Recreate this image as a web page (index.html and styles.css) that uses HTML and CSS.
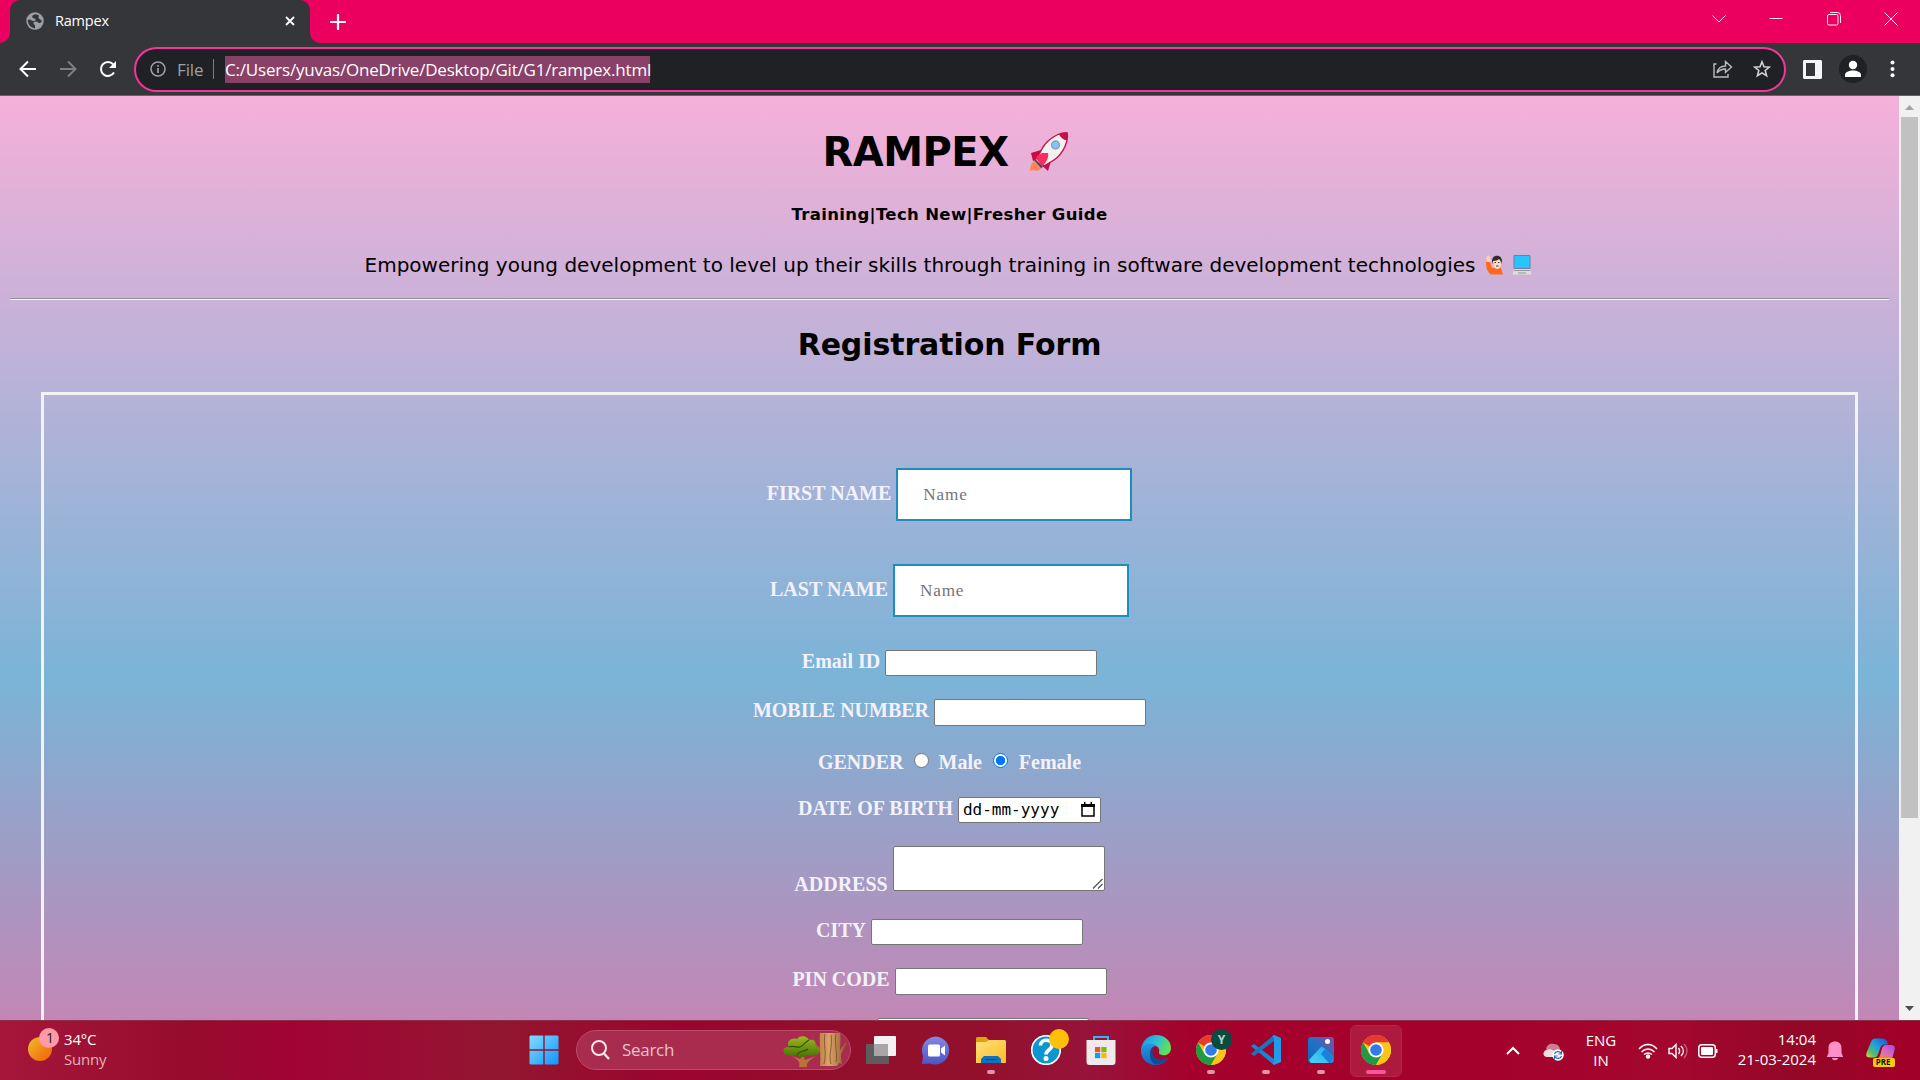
FILE: index.html
```html
<!DOCTYPE html>
<html lang="en">
<head>
<meta charset="utf-8">
<title>Rampex</title>
<link rel="stylesheet" href="styles.css">
</head>
<body>
<svg width="0" height="0" class="defs">
  <defs>
    <symbol id="chrome" viewBox="0 0 30 30">
      <circle cx="15" cy="15" r="15" fill="#fbc116"/>
      <path d="M15 15 2 7.5A15 15 0 0 1 28 7.5H15Z" fill="#e33b2e"/>
      <path d="M2 7.5A15 15 0 0 0 15 30L21.5 18.8 15 15 8.5 18.7Z" fill="#219a48"/>
      <path d="M28 7.5H15L21.5 18.8 15 30A15 15 0 0 0 28 7.5Z" fill="#fcc31a"/>
      <circle cx="15" cy="15" r="7.6" fill="#fff"/><circle cx="15" cy="15" r="5.8" fill="#2f7bea"/>
    </symbol>
    <linearGradient id="sun" x1="0" y1="0" x2="1" y2="1"><stop offset="0" stop-color="#efbf33"/><stop offset=".7" stop-color="#f1780f"/><stop offset="1" stop-color="#ef6a10"/></linearGradient>
    <linearGradient id="win" x1="0" y1="0" x2="1" y2="1"><stop offset="0" stop-color="#83dcff"/><stop offset="1" stop-color="#0d95fb"/></linearGradient>
    <linearGradient id="fold" x1="0" y1="0" x2="1" y2="1"><stop offset="0" stop-color="#ffe07a"/><stop offset="1" stop-color="#fbbd24"/></linearGradient>
    <linearGradient id="chat" x1="0" y1="0" x2="0" y2="1"><stop offset="0" stop-color="#8388e0"/><stop offset="1" stop-color="#4a55c6"/></linearGradient>
    <linearGradient id="edge1" x1="0" y1="0" x2="1" y2=".4"><stop offset="0" stop-color="#1b8fe0"/><stop offset=".55" stop-color="#2cc0d8"/><stop offset="1" stop-color="#5fe15a"/></linearGradient>
    <linearGradient id="edge2" x1="0" y1="0" x2="0" y2="1"><stop offset="0" stop-color="#2596e3"/><stop offset="1" stop-color="#1268b8"/></linearGradient>
    <linearGradient id="photo" x1="0" y1="1" x2="1" y2="0"><stop offset="0" stop-color="#0d66b8"/><stop offset=".5" stop-color="#2072c4"/><stop offset="1" stop-color="#8a4a9c"/></linearGradient>
    <linearGradient id="hill" x1="0" y1="1" x2="1" y2="0"><stop offset="0" stop-color="#45d5f8"/><stop offset="1" stop-color="#2ea3ea"/></linearGradient>
    <linearGradient id="cop1" x1="1" y1="0" x2="0" y2="1"><stop offset="0" stop-color="#1c50d4"/><stop offset=".45" stop-color="#1d9fe0"/><stop offset=".75" stop-color="#55bd6c"/><stop offset="1" stop-color="#e8d62c"/></linearGradient>
    <linearGradient id="cop2" x1="1" y1="0" x2="0" y2="1"><stop offset="0" stop-color="#9550e8"/><stop offset=".5" stop-color="#dc6ab8"/><stop offset="1" stop-color="#f58a50"/></linearGradient>
    <linearGradient id="trunk" x1="0" y1="0" x2="1" y2="0"><stop offset="0" stop-color="#bd8548"/><stop offset=".35" stop-color="#dca36a"/><stop offset="1" stop-color="#8a572c"/></linearGradient>
    <linearGradient id="leaf" x1="0" y1="0" x2="0" y2="1"><stop offset="0" stop-color="#a0b81c"/><stop offset="1" stop-color="#467308"/></linearGradient>
  </defs>
</svg>

<header class="browser">
  <div class="tabstrip">
    <div class="tab">
      <svg width="18" height="18" viewBox="0 0 18 18"><circle cx="9" cy="9" r="8.7" fill="#9aa0a6"/><path d="M9.500 2.200C7 2.500 5.500 4 6.500 5.500S10 6 9.500 8 6 9 5 8 2 8 1.700 8.500C2 12.500 5 16 9 16.300V13c-1.500-.5-2-2-1-3s3-.5 4.200.4S15 11 15.800 9.500C15.500 7 13 7.500 12.600 6S13.500 4 12.500 3Z" fill="#35363a"/></svg>
      <span class="tab-title">Rampex</span>
      <svg width="10" height="10" viewBox="0 0 10 10" class="tab-close"><path d="m1 1 8 8M9 1 1 9" stroke="#fff" stroke-width="1.800"/></svg>
    </div>
    <svg class="new-tab" width="16" height="16" viewBox="0 0 16 16"><path d="M8 1v14M1 8h14" stroke="#fff" stroke-width="2.200" stroke-linecap="round"/></svg>
    <div class="window-buttons">
      <svg width="14" height="14" viewBox="0 0 14 14"><path d="m.5 3.500 6.500 6.500 6.500-6.500"/></svg>
      <svg width="14" height="14" viewBox="0 0 14 14"><path d="M.5 6.500h13"/></svg>
      <svg width="14" height="14" viewBox="0 0 14 14"><rect x=".5" y="2.500" width="10.500" height="10.500" rx="1.500"/><path d="M3 .5h7.500a3 3 0 0 1 3 3V11"/></svg>
      <svg width="14" height="14" viewBox="0 0 14 14"><path d="m.5.5 13 13M13.500.5l-13 13"/></svg>
    </div>
  </div>
  <div class="toolbar">
    <div class="nav">
      <svg width="18" height="18" viewBox="0 0 18 18" stroke="#fff"><path d="M17 9H2M9 1.500 1.500 9 9 16.500"/></svg>
      <svg width="18" height="18" viewBox="0 0 18 18" stroke="#7d7f83"><path d="M1 9h15M9 1.500 16.500 9 9 16.500"/></svg>
      <svg width="18" height="18" viewBox="0 0 18 18" stroke="#fff"><path d="M15 12.500A7 7 0 1 1 14.200 4.300"/><path d="M17 1v7h-7Z" fill="#fff" stroke="none"/></svg>
    </div>
    <div class="omnibox">
      <svg width="16" height="16" viewBox="0 0 16 16"><circle cx="8" cy="8" r="7" fill="none" stroke="#9aa0a6" stroke-width="1.600"/><path d="M8 7v5M8 4v1.700" stroke="#9aa0a6" stroke-width="1.700"/></svg>
      <span class="scheme">File</span>
      <span class="divider"></span>
      <span class="url">C:/Users/yuvas/OneDrive/Desktop/Git/G1/rampex.html</span>
      <svg class="share" width="20" height="18" viewBox="0 0 20 18" fill="none" stroke="#b9bbbe" stroke-width="1.400"><path d="M3.500 4H1v13h14v-3"/><path d="M4 13C5 8 8 6 12.500 6V1.500l6 5.500-6 5.500V9C9 9 6.500 10 4 13Z"/></svg>
      <svg width="18" height="18" viewBox="0 0 18 18" fill="none" stroke="#d0d2d5" stroke-width="1.600"><path d="m9 1.800 2 5 5.400.3-4.200 3.400 1.400 5.300L9 12.900l-4.600 2.900 1.400-5.300L1.600 7.100 7 6.800Z"/></svg>
    </div>
    <svg class="panel-icon" width="19" height="19" viewBox="0 0 19 19"><path fill="#f4f5f7" fill-rule="evenodd" d="M1 0h17l1 1v17l-1 1H1l-1-1V1ZM3 3v13h9V3Z"/></svg>
    <svg class="avatar" width="28" height="28" viewBox="0 0 28 28"><circle cx="14" cy="14" r="14" fill="#202124"/><circle cx="14" cy="10" r="4.200" fill="#fff"/><path d="M6 22v-2c0-3 4-4.500 8-4.500s8 1.500 8 4.500v2Z" fill="#fff"/></svg>
    <svg class="menu" width="5" height="18" viewBox="0 0 5 18" fill="#fff"><circle cx="2.500" cy="2.500" r="2"/><circle cx="2.500" cy="9" r="2"/><circle cx="2.500" cy="15.300" r="2"/></svg>
  </div>
</header>

<div class="viewport">
  <main class="page">
    <h1><span>RAMPEX</span>
      <svg width="40" height="40" viewBox="0 0 40 40"><path d="M8 28c-5 1-7 5-7 11l4-1 2 1c5-1 7-4 7-7Z" fill="#ff8657"/><path d="M12 18 2 21l2 8 8-4ZM22 29l-3 10-9-8Z" fill="#c80c49"/><path d="M38 1c-7-1-18 5-24 14L8 26l7 8 10-6C35 21 40 8 38 1Z" fill="#f3f1f1" stroke="#c80c49" stroke-width="1.400"/><path d="M38.500.700C35 .1 32 1.200 30 2.500c2 3 4.500 5.500 7.500 6C39 5 39.500 2.500 38.500.700Z" fill="#c80c49"/><path d="m7 25 6-4 6 0c1 5-2 10-6 13Z" fill="#fb2d5f"/><path d="m6 27 8 8-2 1-7-8Z" fill="#513a78"/><circle cx="26.500" cy="13" r="4" fill="#7fc4fb" stroke="#969fa3" stroke-width="1.400"/></svg>
    </h1>
    <h3><span>Training|Tech New|Fresher Guide</span></h3>
    <p><span>Empowering young development to level up their skills through training in software development technologies</span>
      <svg class="hand" width="18" height="20" viewBox="0 0 18 20"><path d="M0 7 4 7l2 6 9 0 2 6.500H5C1 17 0 12 0 7Z" fill="#ff681f"/><path d="M1 7 0 3l2-3 2 2 1 5Z" fill="#fdd0b5"/><path d="M6 6c0-7 10-7 10 0l-1 3H7Z" fill="#352a2d"/><path d="M7 6c3 0 5-1 6-2 1 1 2 2 2 4 0 4-2 6-4 6S7 11 7 6Z" fill="#fbdcc8"/><path d="M8.500 7.500H10M12 7.500h1.500M10 11h2.500" stroke="#553037"/></svg>
      <svg class="laptop" width="20" height="20" viewBox="0 0 20 20"><path d="M2 .5h16v13H2Z" fill="#27c5ff" stroke="#747aa8"/><path d="M2 14h16l1.500 5.500H.5Z" fill="#ddd"/><path d="M2 15.500h16M6 18h8" stroke="#969696" stroke-width="1.200"/></svg>
    </p>
    <hr>
    <h2><span>Registration Form</span></h2>
    <form class="form">
      <div class="row tall"><label class="label">FIRST NAME</label><input class="name" placeholder="Name"></div>
      <div class="row tall"><label class="label">LAST NAME</label><input class="name" placeholder="Name"></div>
      <div class="row"><label class="label">Email ID</label><input class="field"></div>
      <div class="row"><label class="label">MOBILE NUMBER</label><input class="field high"></div>
      <div class="row gender"><span class="label">GENDER</span><i class="radio"></i><span class="label">Male</span><i class="radio on"></i><span class="label">Female</span></div>
      <div class="row"><label class="label">DATE OF BIRTH</label><div class="date"><span>dd-mm-yyyy</span><svg width="14" height="15" viewBox="0 0 14 15"><path d="M1 3h12v11H1Z" fill="none" stroke="#000" stroke-width="1.500"/><path d="M0 2h14v3H0ZM3 0h1.500v3H3ZM9.500 0H11v3H9.500Z"/></svg></div></div>
      <div class="row address"><label class="label">ADDRESS</label><div class="area"><svg width="11" height="11" viewBox="0 0 11 11"><path d="M1 10.500 10.500 1M6 10.500 10.500 6" stroke="#555" stroke-width="1.300"/></svg></div></div>
      <div class="row"><label class="label">CITY</label><input class="field"></div>
      <div class="row"><label class="label">PIN CODE</label><input class="field high"></div>
      <div class="row"><label class="label">STATE</label><input class="field"></div>
    </form>
  </main>
  <div class="scrollbar">
    <svg width="9" height="5" viewBox="0 0 9 5"><path d="M0 5h9L4.500 0Z" fill="#a3a3a3"/></svg>
    <div class="thumb"></div>
    <svg width="9" height="5" viewBox="0 0 9 5"><path d="M0 0h9L4.500 5Z" fill="#505050"/></svg>
  </div>
</div>

<footer class="taskbar">
  <div class="weather">
    <svg width="31" height="35" viewBox="0 0 31 35"><circle cx="12" cy="21" r="12" fill="url(#sun)"/><circle cx="21" cy="10" r="10" fill="#ff9ba6"/><text x="18" y="15" class="badge-num">1</text></svg>
    <div><div>34°C</div><div class="dim">Sunny</div></div>
  </div>
  <div class="apps">
    <div class="app"><svg width="30" height="30" viewBox="0 0 30 30" fill="url(#win)"><path d="M1.500.5H14.300V14.300H.5V1.500ZM15.700.5h12.800l1 1v12.800H15.700ZM.5 15.700h13.800v13.800H1.500l-1-1ZM15.700 15.700h13.800v12.800l-1 1H15.700Z"/></svg></div>
    <div class="search">
      <svg width="19" height="20" viewBox="0 0 19 20" fill="none" stroke="#f6e9ee" stroke-width="2"><circle cx="8" cy="8" r="7"/><path d="m13 13.500 5 5.500" stroke-width="2.400"/></svg>
      <span>Search</span>
      <svg class="tree" width="64" height="34" viewBox="0 0 64 34"><path d="M16 34c1-4 1-6-7-11l8 3 3-4 2 5 11-4c-6 4-10 6-9 11Z" fill="#b87436"/><path d="M1 20C-1 15 3 14 6 14 2 8 10 4 14 6c4-5 11-2 12 1 5-1 7 2 7 6 5 1 5 7 2 8-4 3-9 1-12 2-3 2-8 1-9-1-5 1-10 2-13-2Z" fill="url(#leaf)"/><path d="M6 14c5-2 8 1 11 0s5-5 9-7M14 22c2-5 8-3 11-6" stroke="#315606" fill="none" stroke-width="1.300"/><path d="m28 0 6 12 5 5-4 0Z" fill="#a0683a"/><path d="M37 0h20c1 6 0 12 0 17l6-8 1 1-5 9c-2 4-1 8 0 12l-3-1-2 3H37c1-12-1-22 0-34Z" fill="url(#trunk)"/><path d="M42 1c-2 10 2 18-1 30M48 2c2 10-3 20 0 29M53 1c-2 10 2 20 0 28" stroke="#83522b" stroke-width=".9" fill="none"/></svg>
    </div>
    <div class="app"><svg width="32" height="28" viewBox="0 0 32 28"><rect x="1" y="8" width="23" height="20" rx="1" fill="#5f5c5d"/><rect x="9" y="0" width="22" height="20" rx="1" fill="#f2f2f2"/><path d="M9 8h14v12H9Z" fill="#aaa5a7"/></svg></div>
    <div class="app"><svg width="30" height="29" viewBox="0 0 30 29"><path d="M15 .5a14 14 0 1 1-6 27L1 28l1-8A14 14 0 0 1 15 .5Z" fill="url(#chat)"/><rect x="7" y="8.500" width="12" height="12" rx="1.500" fill="#fff"/><path d="m20 12.500 4-3v10l-4-3Z" fill="#fff"/></svg></div>
    <div class="app open"><svg width="30" height="28" viewBox="0 0 30 28"><path d="M0 2 1 1h9l3 3h6v6H0Z" fill="#dfa00e"/><path d="M0 6h10l3-2h16l1 1v22H0Z" fill="url(#fold)"/><path d="M5 27v-4l3-3h14l3 3v4Z" fill="#1072bd"/><path d="M9 23.500h12" stroke="#064f88" stroke-width="1.200"/></svg></div>
    <div class="app"><svg width="30" height="30" viewBox="0 0 30 30"><circle cx="15" cy="15" r="14.300" fill="#0b96d2" stroke="#fff" stroke-width="1.700"/><path d="M9.500 10.500c0-7 11.500-7 11.500-.5 0 5-6 4.500-6 9.500" fill="none" stroke="#fff" stroke-width="3.600"/><circle cx="15" cy="23.500" r="2.500" fill="#fff"/></svg><i class="dot-badge"></i></div>
    <div class="app"><svg width="30" height="30" viewBox="0 0 30 30"><path d="M8 7V2h14v5" fill="none" stroke="#31b7ed" stroke-width="2"/><path d="M.5 5h29v22q0 3-3 3h-23q-3 0-3-3Z" fill="#eee9ea"/><path d="M9 12h5.200v5.200H9Z" fill="#f25022"/><path d="M15.300 12h5.200v5.200h-5.200Z" fill="#7fba00"/><path d="M9 18h5.200v5.200H9Z" fill="#00a4ef"/><path d="M15.300 18h5.200v5.200h-5.200Z" fill="#ffb900"/></svg></div>
    <div class="app"><svg width="30" height="30" viewBox="0 0 30 30"><path d="M0 15C1 5 8 0 15 0c9 0 15 6 15 13 0 6-5 8-9 7-5-1-2-3-3-6-2-5-12-6-18 1Z" fill="url(#edge1)"/><path d="M0 16C1 8 12 7 16 11c-6 0-8 5-6 10s10 6 17 2c-2 4-7 7-12 7C6 30 0 24 0 16Z" fill="url(#edge2)"/><path d="M13 12c-6 4-5 12 0 17 5 1 11-1 14-6-6 3-13 2-15-3-1-3-1-6 1-8Z" fill="#0d4c98"/></svg></div>
    <div class="app open"><svg width="30" height="30"><use href="#chrome"/></svg><b class="profile">Y</b></div>
    <div class="app open"><svg width="31" height="30" viewBox="0 0 31 30"><path d="m0 11 3-2 20 15v6L1 12Z" fill="#1a85d0"/><path d="m0 19 3 2L23 6V0L1 18Z" fill="#1577c2"/><path d="m23 0 7 3v24l-7 3-2-2c1 1 2 0 2-1V3L21 1.500Z" fill="#239be9"/></svg></div>
    <div class="app open"><svg width="26" height="26" viewBox="0 0 26 26"><rect width="26" height="26" rx="3" fill="url(#photo)"/><path d="M1 23 12 11q2-2 4 0l9 9v4l-2 2H3Z" fill="url(#hill)"/><path d="m13 17 4-5 8.500 9-2.500 5H21Z" fill="#1682db"/><circle cx="19.500" cy="4.500" r="2.500" fill="#fff"/></svg></div>
    <div class="app open active"><svg width="30" height="30"><use href="#chrome"/></svg></div>
  </div>
  <div class="tray">
    <svg class="chev" width="14" height="9" viewBox="0 0 14 9"><path d="m1 8 6-6 6 6" fill="none" stroke="#fff" stroke-width="2"/></svg>
    <svg class="cloud" width="21" height="18" viewBox="0 0 21 18"><path d="M3 6C4 1 8 0 11 1c4 0 6 3 6 6l-5 5Z" fill="#cb8091"/><path d="M4 14c-4 0-5-5-1-7 3-1 6-1 8 1l3 6Z" fill="#f1dce2"/><circle cx="15" cy="12" r="5.800" fill="#fff"/><path d="M11.500 11c1-3 5-3 6.500-1M18.500 13c-1 3-5 3-6.500 1M18.500 8v3h-3M11.500 16v-3h3" fill="none" stroke="#1b6bb8" stroke-width="1.200"/></svg>
    <div class="lang"><div>ENG</div><div>IN</div></div>
    <svg class="wifi" width="20" height="16" viewBox="0 0 20 16" fill="none" stroke="#fff" stroke-width="1.500"><path d="M1 6c5-6 13-6 18 0M3.500 9c4-4 9-4 13 0M6 11.500c2.500-2 5.500-2 8 0"/><circle cx="10" cy="13.500" r="1.500" fill="#fff"/></svg>
    <svg class="sound" width="20" height="16" viewBox="0 0 20 16" fill="none" stroke="#fff" stroke-width="1.400"><path d="M1 5.500h3L8 1.500v13l-4-4H1Z"/><path d="M10.500 5c1.500 2 1.500 4 0 6M13 3c3 3 3 7 0 10"/><path d="M16 1c4 4 4 10 0 14" opacity=".35"/></svg>
    <svg class="battery" width="20" height="14" viewBox="0 0 20 14"><rect x=".8" y=".8" width="16.500" height="12.400" rx="3" fill="none" stroke="#fff" stroke-width="1.500"/><rect x="3" y="3" width="12" height="8" rx="1" fill="#fff"/><path d="M18.500 5v4" stroke="#fff" stroke-width="2"/></svg>
    <div class="clock"><div>14:04</div><div>21-03-2024</div></div>
    <svg class="bell" width="16" height="20" viewBox="0 0 16 20" fill="#ff91c8"><path d="M0 15.500 1.500 12V7C1.500 3 4 .5 8 .5S14.500 3 14.500 7v5L16 15.500v.5H0ZM5 17h6c0 3-6 3-6 0Z"/></svg>
    <svg class="copilot" width="30" height="29" viewBox="0 0 30 29"><path d="M5 4Q6 .5 9 .5h8q4 0 5 6h-3q-4 0-5 4l-2 6q-1 3-4 3H4c-5 0-4-3-3-6Z" fill="url(#cop1)"/><path d="M15 14q1-6 4-7h6c5 0 4 4 3 7l-2 7H10c3 0 4-3 5-7Z" fill="url(#cop2)"/><rect x="7" y="20" width="22" height="9" rx="2" fill="#ffc90c"/><text x="9.700" y="27.300" class="pre">PRE</text></svg>
  </div>
</footer>
</body>
</html>
```
FILE: styles.css
```css
* { box-sizing: border-box; }
body { margin: 0; width: 1920px; height: 1080px; overflow: hidden; display: flex; flex-direction: column; font-family: "Open Sans", "Noto Sans", sans-serif; }
svg { flex: none; display: block; }
.defs { position: absolute; }

.browser { height: 96px; flex: none; color: #fff; }
.tabstrip { height: 43px; display: flex; align-items: center; background: #ec005f; padding-left: 10px; }
.tab { position: relative; width: 300px; height: 43px; background: #35363a; border-radius: 10px 10px 0 0; display: flex; align-items: center; padding: 0 14px 2px 16px; font-size: 14.500px; }
.tab::before, .tab::after { content: ""; position: absolute; bottom: 0; width: 10px; height: 10px; }
.tab::before { left: -10px; background: radial-gradient(circle at 0 0, #ec005f 9.500px, #35363a 10px); }
.tab::after { right: -10px; background: radial-gradient(circle at 100% 0, #ec005f 9.500px, #35363a 10px); }
.tab-title { margin-left: 11px; letter-spacing: -.2px; }
.tab-close { margin-left: auto; margin-right: 1px; }
.new-tab { margin-left: 20px; }
.window-buttons { margin-left: auto; display: flex; gap: 43.500px; padding-right: 22px; padding-bottom: 6px; }
.window-buttons svg { fill: none; stroke: #ffe5ef; stroke-width: 1px; }
.toolbar { height: 53px; background: #35363a; border-bottom: 1px solid #626367; display: flex; align-items: center; padding-left: 19px; }
.nav { display: flex; gap: 22px; width: 115px; }
.nav svg { fill: none; stroke-width: 2px; }
.omnibox { width: 1652px; height: 45px; border: 2px solid #f2369c; border-radius: 23px; background: #202124; display: flex; align-items: center; padding: 0 13px 0 14px; font-size: 17px; }
.scheme { color: #9aa0a6; margin-left: 11px; width: 27px; letter-spacing: -.1px; }
.divider { width: 1px; height: 20px; background: #7a7d82; margin: 0 11px 0 9px; }
.url { background: #8a4168; line-height: 27px; height: 27px; letter-spacing: -.2px; width: 425px; white-space: nowrap; }
.share { margin-left: auto; margin-right: 20px; }
.panel-icon { margin-left: 17px; }
.avatar { margin-left: 17px; }
.menu { margin-left: 23px; }

.viewport { height: 924px; flex: none; display: flex; overflow: hidden; }
.page { width: 1899px; height: 1162px; flex: none; display: flex; flex-direction: column; background: linear-gradient(#f6b0d9, #7ab4d7 50%, #f5679d); font-family: Verdana, "DejaVu Sans", sans-serif; color: #000; }
h1, h2, h3, p { margin: 0; flex: none; display: flex; justify-content: center; align-items: center; white-space: nowrap; }
h1 { height: 71px; margin-top: 20px; font-size: 40px; gap: 20px; line-height: 50px; letter-spacing: -.5px; padding-right: 8px; }
h3 { height: 40px; margin-top: 7px; font-size: 16.500px; letter-spacing: .35px; }
p { height: 40px; margin-top: 11px; font-size: 20px; letter-spacing: .01px; }
.hand { margin-left: 11px; }
.laptop { margin-left: 8px; margin-right: 2px; }
hr { margin: 13px 10px 0; border: 0; height: 2px; border-top: 1px solid #94959a; border-bottom: 1px solid #f5f0f6; flex: none; }
h2 { height: 50px; margin-top: 19px; font-size: 30px; letter-spacing: -.1px; }
.form { margin: 23px 41px 0; border: 3px solid #f3f3f6; padding-top: 73px; height: 900px; flex: none; display: grid; grid-template-rows: 96px 86px 49px 52px 46px 49px 73px 49px 50px 50px; font-family: "Liberation Serif", serif; }
.row { display: flex; justify-content: center; align-items: flex-start; gap: 5px; }
.label { font-size: 20px; line-height: 22px; font-weight: bold; color: #f4f1fa; white-space: nowrap; }
.tall .label { margin-top: 14px; }
.address .label { margin-top: 27px; }
input { font-family: inherit; border: 1px solid #767676; border-radius: 2px; background: #fff; padding: 0; outline: none; }
.name { width: 236px; height: 53px; border: 2px solid #1d8dbb; border-radius: 0; padding: 0 25px; font-size: 17.200px; letter-spacing: .8px; }
.name::placeholder { color: #757575; }
.field { width: 212px; height: 26px; }
.high { height: 27px; }
.gender { gap: 10px; }
.radio { width: 15px; height: 15px; margin-top: 2px; border: 1px solid #767676; border-radius: 50%; background: #fff; }
.radio.on { margin-left: 1px; margin-right: 1px; border: 1.500px solid #0075ff; background: radial-gradient(circle, #0075ff 4.300px, #fff 5px); }
.date { width: 143px; height: 26px; border: 1px solid #767676; border-radius: 2px; background: #fff; display: flex; justify-content: space-between; align-items: center; padding: 0 5px 2px 4px; font: 16px "DejaVu Sans Mono", monospace; }
.area { width: 212px; height: 45px; border: 1px solid #767676; border-radius: 2px; background: #fff; display: flex; justify-content: flex-end; align-items: flex-end; padding: 1px; }

.scrollbar { width: 21px; height: 924px; background: #f1f1f1; display: flex; flex-direction: column; align-items: center; padding: 9px 0 9px; }
.thumb { width: 17px; height: 701px; background: #c1c1c1; margin: 7px 0 auto; }

.taskbar { height: 60px; flex: none; border-top: 1px solid #8d3045; display: flex; color: #fff; font-size: 15px; line-height: 20px;
  background: linear-gradient(90deg, #a5163a 0, #960c2c 190px, #a20336 290px, #921630 500px, #9b042e 680px, #92102c 850px, #92102c 980px, #97133a 1090px, #a4022c 1190px, #a4022c 1480px, #a3072e 1680px, #930727 1800px, #a10129 1900px); }
.weather { display: flex; gap: 5px; padding: 8px 0 0 28px; width: 516px; flex: none; }
.weather > div { letter-spacing: -.2px; }
.weather svg { margin-top: -1px; }
.dim { color: #e2b2bd; }
.badge-num { font-size: 14px; fill: #222; }
.apps { display: flex; align-items: center; flex: none; }
.app { width: 55px; height: 59px; display: flex; align-items: center; justify-content: center; position: relative; padding-left: 1px; padding-bottom: 1px; }
.open::after { content: ""; position: absolute; left: 23.500px; bottom: 6px; width: 8px; height: 4px; border-radius: 2px; background: #d897aa; }
.active::before { content: ""; position: absolute; left: 2px; top: 4px; width: 50px; height: 50px; border-radius: 6px; border: 1px solid #b02548; background: #ad1a3e; }
.active svg { position: relative; }
.active::after { left: 17.500px; width: 20px; background: #ff509f; }
.search { width: 275px; height: 40px; margin: 0 2px 1px 5px; border: 1px solid #b94c6b; border-radius: 20px; background: #a92c4e; display: flex; align-items: center; padding: 0 3px 0 14px; font-size: 17px; color: #e9c3cd; }
.search span { margin-left: 12px; letter-spacing: -.3px; }
.tree { margin-left: auto; }
.dot-badge { position: absolute; left: 31px; top: 8px; width: 20px; height: 20px; border-radius: 50%; background: #ffc107; }
.profile { position: absolute; left: 28px; top: 8px; width: 21px; height: 21px; border-radius: 50%; background: #084c40; color: #b8d2cc; font-size: 12px; line-height: 21px; text-align: center; }
.tray { flex: 1; display: flex; align-items: center; }
.chev { margin-left: 103px; }
.cloud { margin-left: 23px; margin-top: 3px; }
.lang { width: 38px; margin-left: 18px; text-align: center; margin-bottom: 1px; }
.wifi { margin-left: 18px; }
.sound { margin-left: 10px; }
.battery { margin-left: 10px; }
.clock { width: 80px; margin-left: 18px; text-align: right; white-space: nowrap; margin-bottom: 3px; }
.bell { margin-left: 11px; }
.copilot { margin-left: 23px; margin-top: 3px; }
.pre { font: bold 8px "Open Sans", sans-serif; fill: #111; }
```
